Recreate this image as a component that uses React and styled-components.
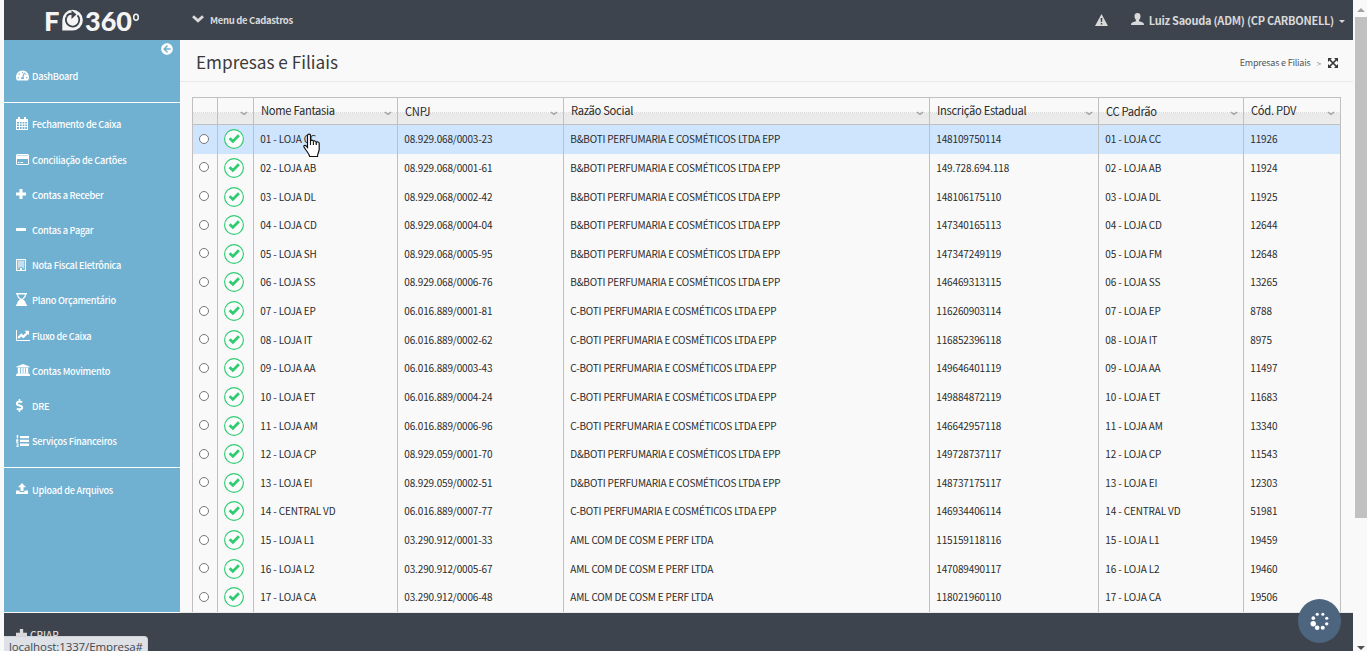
import React, { useState } from 'react';
import styled, { createGlobalStyle } from 'styled-components';
import { FaTachometerAlt, FaArrowCircleLeft, FaDollarSign } from 'react-icons/fa';

const MENU = [
    [{ label: 'DashBoard', icon: 'dashboard' }],
    [
        { label: 'Fechamento de Caixa', icon: 'calendar' },
        { label: 'Conciliação de Cartões', icon: 'card' },
        { label: 'Contas a Receber', icon: 'plus' },
        { label: 'Contas a Pagar', icon: 'minus' },
        { label: 'Nota Fiscal Eletrônica', icon: 'building' },
        { label: 'Plano Orçamentário', icon: 'hourglass' },
        { label: 'Fluxo de Caixa', icon: 'chart' },
        { label: 'Contas Movimento', icon: 'bank' },
        { label: 'DRE', icon: 'dollar' },
        { label: 'Serviços Financeiros', icon: 'list' },
    ],
    [{ label: 'Upload de Arquivos', icon: 'upload' }],
];

const COLUMNS = [
    { title: 'Nome Fantasia' },
    { title: 'CNPJ', low: true },
    { title: 'Razão Social' },
    { title: 'Inscrição Estadual' },
    { title: 'CC Padrão', low: true },
    { title: 'Cód. PDV' },
];

const BB = 'B&BOTI PERFUMARIA E COSMÉTICOS LTDA EPP';
const CB = 'C-BOTI PERFUMARIA E COSMÉTICOS LTDA EPP';
const DB = 'D&BOTI PERFUMARIA E COSMÉTICOS LTDA EPP';
const AML = 'AML COM DE COSM E PERF LTDA';

const ROWS = [
    ['01 - LOJA CC', '08.929.068/0003-23', BB, '148109750114', '01 - LOJA CC', '11926'],
    ['02 - LOJA AB', '08.929.068/0001-61', BB, '149.728.694.118', '02 - LOJA AB', '11924'],
    ['03 - LOJA DL', '08.929.068/0002-42', BB, '148106175110', '03 - LOJA DL', '11925'],
    ['04 - LOJA CD', '08.929.068/0004-04', BB, '147340165113', '04 - LOJA CD', '12644'],
    ['05 - LOJA SH', '08.929.068/0005-95', BB, '147347249119', '05 - LOJA FM', '12648'],
    ['06 - LOJA SS', '08.929.068/0006-76', BB, '146469313115', '06 - LOJA SS', '13265'],
    ['07 - LOJA EP', '06.016.889/0001-81', CB, '116260903114', '07 - LOJA EP', '8788'],
    ['08 - LOJA IT', '06.016.889/0002-62', CB, '116852396118', '08 - LOJA IT', '8975'],
    ['09 - LOJA AA', '06.016.889/0003-43', CB, '149646401119', '09 - LOJA AA', '11497'],
    ['10 - LOJA ET', '06.016.889/0004-24', CB, '149884872119', '10 - LOJA ET', '11683'],
    ['11 - LOJA AM', '06.016.889/0006-96', CB, '146642957118', '11 - LOJA AM', '13340'],
    ['12 - LOJA CP', '08.929.059/0001-70', DB, '149728737117', '12 - LOJA CP', '11543'],
    ['13 - LOJA EI', '08.929.059/0002-51', DB, '148737175117', '13 - LOJA EI', '12303'],
    ['14 - CENTRAL VD', '06.016.889/0007-77', CB, '146934406114', '14 - CENTRAL VD', '51981'],
    ['15 - LOJA L1', '03.290.912/0001-33', AML, '115159118116', '15 - LOJA L1', '19459'],
    ['16 - LOJA L2', '03.290.912/0005-67', AML, '147089490117', '16 - LOJA L2', '19460'],
    ['17 - LOJA CA', '03.290.912/0006-48', AML, '118021960110', '17 - LOJA CA', '19506'],
];

function MenuIcon({ name }) {
    switch (name) {
        case 'dashboard':
            return <FaTachometerAlt size={13} />;
        case 'bank':
            return (
                <svg width="14" height="12" viewBox="0 0 14 12" fill="currentColor">
                    <path d="M7 0l6.500 2.500v1h-13v-1zM1.800 4h2.200v5H1.800zM4.800 4h1.900v5H4.800zM7.400 4h1.900v5H7.400zM10 4h2.200v5H10zM1 9.300h12v1H1zM0 10.300h14V12H0z" />
                </svg>
            );
        case 'dollar':
            return <FaDollarSign size={13} style={{ marginLeft: -3 }} />;
        case 'list':
            return (
                <svg width="13" height="12" viewBox="0 0 13 12" fill="currentColor">
                    <path d="M4 1h9v2.300H4zM4 4.800h9v2.300H4zM4 8.600h9v2.300H4z" />
                    <path d="M1 0h1.200v3.300H.7V1H.3zM.2 4.300h2.200v1.600L1.300 7h1.200v.8H.2zM.2 8.500h2.300V12H.2v-.8h1.300v-.6H.6v-.7h.9v-.6H.2z" />
                </svg>
            );
        case 'calendar':
            return (
                <svg width="12" height="13" viewBox="0 0 12 13" fill="currentColor">
                    <path
                        fillRule="evenodd"
                        d="M0 2h2V0h2v2h4V0h2v2h2v11H0zM1 5v1.500h2V5zm3 0v1.500h1.700V5zm2.700 0v1.500h1.700V5zm2.600 0v1.500H11V5zM1 7.500V9h2V7.500zm3 0V9h1.700V7.500zm2.700 0V9h1.700V7.500zm2.600 0V9H11V7.500zM1 10v2h2v-2zm3 0v2h1.700v-2zm2.700 0v2h1.700v-2zm2.600 0v2H11v-2z"
                    />
                </svg>
            );
        case 'card':
            return (
                <svg width="13" height="11" viewBox="0 0 13 11" fill="currentColor">
                    <path fillRule="evenodd" d="M1 0h11l1 1v9l-1 1H1l-1-1V1zM1 5v5h11V5z" />
                    <path fill="#70b0d1" opacity="0.4" d="M1 1h11v1H1z" />
                    <path d="M2 8h1.500v1H2zM4.500 8h2.500v1H4.500z" />
                </svg>
            );
        case 'plus':
            return (
                <svg width="10" height="10" viewBox="0 0 10 10" fill="currentColor">
                    <path d="M3.500 0h3v3.500H10v3H6.500V10h-3V6.500H0v-3h3.500z" />
                </svg>
            );
        case 'minus':
            return (
                <svg width="10" height="10" viewBox="0 0 10 10" fill="currentColor">
                    <rect y="3" width="10" height="3" rx="0.6" />
                </svg>
            );
        case 'building':
            return (
                <svg width="10" height="12" viewBox="0 0 10 12" fill="currentColor">
                    <path fillRule="evenodd" d="M0 0h10v12H0zM1.200 1v10H4V9h2v2h2.800V1z" />
                    <path opacity="0.6" d="M2 1.500h6v6.700H2zM2 8h1.300v1.500H2zM6.700 8H8v1.500H6.700z" />
                </svg>
            );
        case 'hourglass':
            return (
                <svg width="11" height="13" viewBox="0 0 11 13" fill="currentColor">
                    <path
                        fillRule="evenodd"
                        d="M0 0h11v1.600H10C10 4 8.600 5.600 7 6.500c1.600.9 3 2.500 3 4.900h1V13H0v-1.600h1C1 9 2.400 7.400 4 6.500 2.400 5.600 1 4 1 1.600H0zM2.200 1.600C2.200 3.200 3.200 4.800 5 5.800h1c1.800-1 2.800-2.600 2.800-4.200z"
                    />
                </svg>
            );
        case 'chart':
            return (
                <svg width="14" height="11" viewBox="0 0 14 11" fill="none" stroke="currentColor">
                    <path d="M0.500 0v10.500H14" />
                    <path strokeWidth="2.200" d="M2.200 8 5.300 4.900 7.300 6.900 11.500 2.700" />
                    <path fill="currentColor" stroke="none" d="M8.600 0.800H13v4.400z" />
                </svg>
            );
        default:
            return (
                <svg width="12" height="12" viewBox="0 0 12 12" fill="currentColor">
                    <path d="M6 0l4 4.200H7.500V8h-3V4.200H2z" />
                    <path d="M0 7.500h3.500V9h5V7.500H12V11H0z" />
                </svg>
            );
    }
}

function Logo() {
    return (
        <LogoShape width="98" height="40" viewBox="0 0 98 40">
            <text x="0" y="30.5" fontSize="26.5" textLength="15.5" lengthAdjust="spacingAndGlyphs">F</text>
            <path d="M28.500 9.800A10.300 10.300 0 1 1 28.500 30.500H18.300V20.200A10.300 10.300 0 0 1 28.500 9.800z" />
            <path d="M33.500 15.300A6.700 6.700 0 1 1 22.800 16.500" fill="none" stroke="#3d444e" strokeWidth="1.800" />
            <path d="M22.800 16.500C24 14 26.500 13.300 29.500 14" fill="none" stroke="#3d444e" strokeWidth="1.800" />
            <path d="M27.500 10.200l5 4.300-5 4.500z" fill="#3d444e" />
            <text x="41" y="30.5" fontSize="26.5" textLength="47" lengthAdjust="spacingAndGlyphs">360</text>
            <ellipse cx="92" cy="17.3" rx="2.300" ry="3" fill="none" stroke="#f4f4f4" strokeWidth="1.5" />
        </LogoShape>
    );
}

function StatusCheck() {
    return (
        <CheckShape width="20" height="20" viewBox="0 0 20 20" fill="none">
            <circle cx="10" cy="10" r="9.400" fill="#fcfcfc" stroke="#2ecc71" strokeWidth="1.150" />
            <path d="M5.600 9.200l3.300 3.200 6-6.100" stroke="#2ecc71" strokeWidth="2.800" />
        </CheckShape>
    );
}

function Chevron() {
    return (
        <ChevronShape width="8" height="5" viewBox="0 0 8 5">
            <path d="M0.800 1l3.200 2.400L7.200 1" fill="none" stroke="#a3a3a3" strokeWidth="1.500" />
        </ChevronShape>
    );
}

function Spinner() {
    const dots = [1.5, 1.6, 1.7, 2, 2.3, 2.7, 1.8, 1.6];
    return (
        <svg width="22" height="22" viewBox="-11 -11 22 22" fill="#fff">
            {dots.map((r, i) => {
                const angle = ((i * 45 - 67) * Math.PI) / 180;
                return <circle key={i} cx={7.3 * Math.cos(angle)} cy={7.3 * Math.sin(angle)} r={r} />;
            })}
        </svg>
    );
}

function App() {
    const [selected, setSelected] = useState(0);

    return (
        <Shell>
            <GlobalStyle />
            <Main>
                <TopBar>
                    <Logo />
                    <TopMenu>
                        <svg width="12" height="8" viewBox="0 0 12 8">
                            <path d="M1 1.200l5 4.600 5-4.600" fill="none" stroke="currentColor" strokeWidth="2.800" />
                        </svg>
                        Menu de Cadastros
                    </TopMenu>
                    <UserArea>
                        <svg width="13" height="12" viewBox="0 0 13 12" fill="currentColor">
                            <path fillRule="evenodd" d="M6.500 0L13 12H0zM5.600 4l.3 4h1.200l.3-4zm.2 5v1.500h1.400V9z" />
                        </svg>
                        <UserName>
                            <svg width="13" height="12" viewBox="0 0 13 12" fill="currentColor">
                                <path d="M6.500 0C8.600 0 9.800 1.500 9.500 3.800 9.300 5.400 8.700 6.300 8 6.900c0 1.500 1 1.700 2.600 2.200C12.200 9.600 13 10.200 13 12H0c0-1.800.8-2.400 2.400-2.900C4 8.600 5 8.400 5 6.900 4.300 6.300 3.700 5.400 3.500 3.800 3.200 1.500 4.400 0 6.500 0z" />
                            </svg>
                            <span>Luiz Saouda (ADM) (CP CARBONELL)</span>
                            <Caret />
                        </UserName>
                    </UserArea>
                </TopBar>

                <Body>
                    <SideNav>
                        <Collapse>
                            <FaArrowCircleLeft size={12} />
                        </Collapse>
                        {MENU.map((group, i) => (
                            <NavGroup key={i}>
                                {group.map((item) => (
                                    <NavItem key={item.label}>
                                        <NavIcon>
                                            <MenuIcon name={item.icon} />
                                        </NavIcon>
                                        {item.label}
                                    </NavItem>
                                ))}
                            </NavGroup>
                        ))}
                    </SideNav>

                    <Content>
                        <PageHeader>
                            <Title>Empresas e Filiais</Title>
                            <Breadcrumb>
                                <span>Empresas e Filiais</span>
                                <Separator>&gt;</Separator>
                                <svg width="10" height="10" viewBox="0 0 10 10" fill="#3a3a3a">
                                    <path d="M0 0h4L0 4zM10 0v4L6 0zM0 10V6l4 4zM10 10H6l4-4z" />
                                    <path d="M1 1l8 8M9 1L1 9" stroke="#3a3a3a" strokeWidth="1.700" />
                                </svg>
                            </Breadcrumb>
                        </PageHeader>

                        <Grid>
                            <GridHead>
                                <HeadCell />
                                <HeadCell>
                                    <Chevron />
                                </HeadCell>
                                {COLUMNS.map((column) => (
                                    <HeadCell key={column.title}>
                                        <HeadTitle $low={column.low}>{column.title}</HeadTitle>
                                        <Chevron />
                                    </HeadCell>
                                ))}
                            </GridHead>
                            {ROWS.map((row, i) => (
                                <GridRow key={row[0]} $active={i === selected} onClick={() => setSelected(i)}>
                                    <Cell $center>
                                        <Radio />
                                    </Cell>
                                    <Cell $center>
                                        <StatusCheck />
                                    </Cell>
                                    {row.map((value, j) => (
                                        <Cell key={j} $tight={j === 2}>{value}</Cell>
                                    ))}
                                </GridRow>
                            ))}
                        </Grid>
                    </Content>
                </Body>

                <Footer>
                    <svg width="11" height="11" viewBox="0 0 10 10" fill="currentColor">
                        <path d="M3.500 0h3v3.500H10v3H6.500V10h-3V6.500H0v-3h3.500z" />
                    </svg>
                    CRIAR
                </Footer>
            </Main>

            <ScrollBar>
                <Arrow $color="#a3a3a3" />
                <Thumb />
                <Arrow $color="#505050" $down />
            </ScrollBar>

            <StatusUrl>localhost:1337/Empresa#</StatusUrl>
            <Floating>
                <Spinner />
            </Floating>
            <Pointer width="18" height="25" viewBox="0 0 18 25">
                <path
                    d="M4.500 14.500V2.500C4.500.6 7.500.6 7.500 2.500V8c.3-1.300 2.900-1 2.900.6.4-1.100 2.900-.8 2.900.8.6-1 2.900-.5 2.900 1.100V16c0 3-1.700 4-1.700 7.500H6.700C6.300 20.500 3.500 18.500 1 14c-.6-1.300.9-2.200 2-1.200z"
                    fill="#fff"
                    stroke="#111"
                    strokeWidth="1.200"
                />
                <path d="M7.500 7.500V12M10.400 8.500V12M13.300 9.500V12" stroke="#111" strokeWidth="1.100" />
            </Pointer>
        </Shell>
    );
}

const GlobalStyle = createGlobalStyle`
    * {
        box-sizing: border-box;
    }
    body {
        margin: 0;
        overflow: hidden;
        background: #f9f9f9;
        color: #2b2b2b;
        font-family: "Noto Sans CJK JP", "Open Sans", sans-serif;
    }
    svg {
        display: block;
        flex: none;
    }
`;

const Shell = styled.div`
    position: relative;
    display: flex;
    width: 1367px;
    height: 651px;
    padding-left: 4px;
    overflow: hidden;
`;

const Main = styled.div`
    display: flex;
    flex-direction: column;
    width: 1349px;
    height: 651px;
`;

const TopBar = styled.header`
    display: flex;
    align-items: center;
    height: 40px;
    flex: none;
    padding: 0 8px 0 40px;
    background: #3d444e;
    color: #d9d9d9;
    font-weight: 700;
`;

const LogoShape = styled.svg`
    overflow: visible;
    fill: #f4f4f4;
    font-family: Lato, sans-serif;
    font-weight: 900;
`;

const TopMenu = styled.div`
    display: flex;
    align-items: center;
    gap: 6px;
    margin-left: 50px;
    font-size: 9.5px;
    line-height: 14px;
    letter-spacing: -0.33px;

    svg {
        margin-top: -3px;
    }
`;

const UserArea = styled.div`
    display: flex;
    align-items: center;
    gap: 23px;
    margin-left: auto;

    > svg {
        margin-top: -1px;
    }
`;

const UserName = styled.div`
    display: flex;
    align-items: center;
    gap: 5px;
    font-size: 11px;
    line-height: 16px;
    letter-spacing: -0.27px;
    white-space: nowrap;

    svg {
        margin-top: -2px;
    }
`;

const Caret = styled.i`
    border: 3px solid transparent;
    border-top-color: #d9d9d9;
    border-bottom: 0;
    margin-top: 3px;
`;

const Body = styled.div`
    display: flex;
    height: 573px;
    flex: none;
`;

const SideNav = styled.nav`
    width: 176px;
    height: 572px;
    flex: none;
    background: #70b0d1;
    color: #fff;
`;

const Collapse = styled.div`
    display: flex;
    justify-content: flex-end;
    height: 14px;
    padding: 3px 7px 0 0;
`;

const NavGroup = styled.div`
    padding: 4.2px 0 8.3px;

    & + & {
        border-top: 1px solid #fff;
    }
`;

const NavItem = styled.a`
    display: flex;
    align-items: center;
    height: 35.2px;
    padding-left: 12px;
    font-size: 9.2px;
    line-height: 14px;
    font-weight: 500;
    letter-spacing: -0.25px;
    white-space: nowrap;
`;

const NavIcon = styled.span`
    display: flex;
    width: 16px;
    flex: none;
    margin-top: -1px;
`;

const Content = styled.main`
    flex: 1;
    min-width: 0;
    overflow: hidden;
    border-bottom: 1px solid #e8e8e8;
`;

const PageHeader = styled.div`
    display: flex;
    align-items: center;
    justify-content: space-between;
    height: 42px;
    padding: 4px 15px 0 16px;
    border-bottom: 1px solid #e9e9e9;
`;

const Title = styled.h1`
    margin: -1px 0 0;
    font-size: 17.2px;
    line-height: 24px;
    font-weight: 400;
    color: #3a3a3a;
`;

const Breadcrumb = styled.div`
    display: flex;
    align-items: center;
    font-size: 9px;
    line-height: 14px;
    letter-spacing: -0.2px;
    color: #555;
`;

const Separator = styled.span`
    margin: 0 7px 0 6px;
    font-size: 8.5px;
    color: #999;
`;

const Grid = styled.div`
    width: 1149px;
    margin: 15px 0 0 12px;
    border: 1px solid #c0c0c0;
    border-width: 1px 0 0 1px;
`;

const GridHead = styled.div`
    display: grid;
    grid-template-columns: 25px 36px 144px 166px 366px 169px 145px 97px;
    height: 27px;
    border-bottom: 1px solid #c0c0c0;
`;

const HeadCell = styled.div`
    display: flex;
    align-items: flex-start;
    border-right: 1px solid #c0c0c0;
    background:
        repeating-linear-gradient(90deg, #dcdcdc 0 1px, transparent 1px 2px) 0 14px / 100% 1px no-repeat,
        linear-gradient(#f9f9f9 0 15px, #e9e9e9 15px, #ececec 100%);
    font-size: 11.2px;
    line-height: 16px;
    letter-spacing: -0.3px;
`;

const HeadTitle = styled.span`
    margin: ${({ $low }) => ($low ? 6 : 5)}px 0 0 7px;
    position: relative;
    top: -1px;
`;

const ChevronShape = styled.svg`
    margin: 13px 5px 0 auto;
`;

const GridRow = styled.div`
    display: grid;
    grid-template-columns: 25px 36px 144px 166px 366px 169px 145px 97px;
    height: 28.625px;
    background: ${({ $active }) => ($active ? '#cfe5fe' : 'transparent')};
`;

const Cell = styled.div`
    display: flex;
    align-items: center;
    justify-content: ${({ $center }) => ($center ? 'center' : 'flex-start')};
    padding-left: ${({ $center }) => ($center ? 0 : 6.3)}px;
    border-right: 1px solid #c0c0c0;
    font-size: 10px;
    line-height: 14px;
    letter-spacing: ${({ $tight }) => ($tight ? -0.19 : -0.14)}px;
    white-space: nowrap;
`;

const CheckShape = styled.svg`
    margin-left: -3px;
`;

const Radio = styled.i`
    width: 10px;
    height: 10px;
    margin: -1px 0 0 -2px;
    border: 1px solid #767676;
    border-radius: 50%;
    background: #fff;
`;

const Footer = styled.footer`
    display: flex;
    align-items: center;
    gap: 3px;
    height: 38px;
    flex: none;
    padding: 4px 0 0 12px;
    background: #3d444e;
    color: #d9d9d9;
    font-size: 10px;
    font-weight: 500;
`;

const ScrollBar = styled.div`
    display: flex;
    flex-direction: column;
    align-items: center;
    width: 14px;
    height: 651px;
    padding: 8px 0 1px 2px;
`;

const Arrow = styled.i`
    border: 4px solid transparent;
    border-${({ $down }) => ($down ? 'top' : 'bottom')}-color: ${({ $color }) => $color};
    border-${({ $down }) => ($down ? 'bottom' : 'top')}-width: 0;
    ${({ $down }) => $down && 'margin-top: auto;'}
`;

const Thumb = styled.div`
    width: 12px;
    height: 501px;
    margin-top: 5px;
    background: #c1c1c1;
`;

const StatusUrl = styled.div`
    position: absolute;
    left: 4px;
    bottom: 0;
    width: 144px;
    height: 15px;
    padding-left: 5px;
    overflow: hidden;
    border: 1px solid #d0d3d8;
    border-width: 1px 1px 0 0;
    border-radius: 0 4px 0 0;
    background: #dee1e6;
    color: #45484d;
    font-family: "Open Sans", sans-serif;
    font-size: 11.5px;
    line-height: 20px;
    letter-spacing: -0.1px;
    white-space: nowrap;
`;

const Floating = styled.button`
    position: absolute;
    left: 1298px;
    top: 599px;
    display: flex;
    align-items: center;
    justify-content: center;
    width: 43px;
    height: 44px;
    padding: 0;
    border: 0;
    border-radius: 50%;
    background: #4e6580;
`;

const Pointer = styled.svg`
    position: absolute;
    left: 303px;
    top: 133px;
`;

export default App;
